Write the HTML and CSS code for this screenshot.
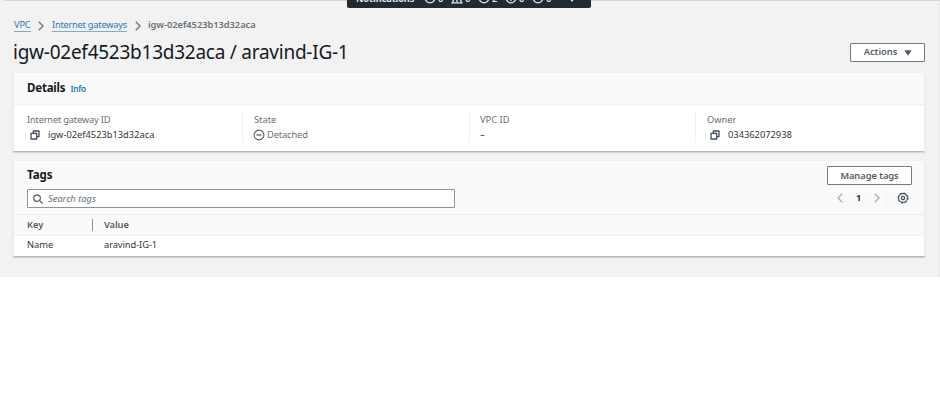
FILE: index.html
```
<!DOCTYPE html>
<html lang="en">
<head>
<meta charset="utf-8">
<title>Internet gateway details</title>
<link rel="stylesheet" href="styles.css">
</head>
<body>
<svg class="defs" aria-hidden="true">
  <symbol id="copy" viewBox="0 0 10 10"><path d="M1 3.3h5.7V9H1zM3.3 3.3V1H9v5.7H6.7" fill="none" stroke="#414d5c" stroke-width="1.3" stroke-linejoin="round"/></symbol>
  <symbol id="next" viewBox="0 0 6 10"><path d="M.8.8 5 5 .8 9.2" fill="none" stroke="currentColor" stroke-width="1.3"/></symbol>
  <symbol id="circle" viewBox="0 0 12 12"><circle cx="6" cy="6" r="4.8" fill="none" stroke="currentColor" stroke-width="1.3"/></symbol>
</svg>
<main class="console">
  <div class="notifications">
    <b class="n-title">Notifications</b>
    <span class="n-item"><svg><use href="#circle"/></svg>0</span>
    <span class="n-item"><svg viewBox="0 0 12 12"><path d="M6 1 1.2 10.8h9.6zM6 4v6" fill="none" stroke="currentColor" stroke-width="1.3"/></svg>0</span>
    <span class="n-item"><svg><use href="#circle"/></svg>2</span>
    <span class="n-item"><svg viewBox="0 0 12 12"><circle cx="6" cy="6" r="4.8" fill="none" stroke="currentColor" stroke-width="1.3"/><path d="M6 5v4" stroke="currentColor" stroke-width="1.3"/></svg>0</span>
    <span class="n-item"><svg><use href="#circle"/></svg>0</span>
    <svg class="n-caret" viewBox="0 0 6 6"><path d="M0 1h6L3 5z" fill="currentColor"/></svg>
  </div>
  <nav class="crumbs">
    <a class="c-vpc">VPC</a><svg><use href="#next"/></svg><a class="c-list">Internet gateways</a><svg><use href="#next"/></svg><span class="c-here">igw-02ef4523b13d32aca</span>
  </nav>
  <header class="page-head">
    <h1>igw-02ef4523b13d32aca / aravind-IG-1</h1>
    <button class="btn actions"><span>Actions</span><svg viewBox="0 0 8 6"><path d="M.3.3h7.4L4 5.8z" fill="#545b64"/></svg></button>
  </header>
  <section class="card details">
    <div class="card-head"><h2>Details</h2><a class="info">Info</a></div>
    <div class="columns">
      <div class="col"><div class="label l-id">Internet gateway ID</div><div class="value"><svg class="copy"><use href="#copy"/></svg><span class="v-id">igw-02ef4523b13d32aca</span></div></div>
      <div class="col"><div class="label">State</div><div class="value detached"><svg viewBox="0 0 12 12"><circle cx="6" cy="6" r="4.9" fill="none" stroke="currentColor" stroke-width="1.1"/><path d="M3.4 6h5.2" stroke="currentColor" stroke-width="1.2"/></svg><span>Detached</span></div></div>
      <div class="col"><div class="label">VPC ID</div><div class="value">–</div></div>
      <div class="col"><div class="label">Owner</div><div class="value"><svg class="copy"><use href="#copy"/></svg><span class="v-owner">034362072938</span></div></div>
    </div>
  </section>
  <section class="card tags">
    <div class="tags-head">
      <div class="left">
        <h2>Tags</h2>
        <div class="search"><svg viewBox="0 0 10 10"><circle cx="4.1" cy="4.1" r="3.3" fill="none" stroke="#545b64" stroke-width="1.2"/><path d="m6.5 6.5 3 3" stroke="#545b64" stroke-width="1.3"/></svg><span>Search tags</span></div>
      </div>
      <div class="right">
        <button class="btn manage"><span>Manage tags</span></button>
        <div class="pager">
          <svg class="arrow prev"><use href="#next"/></svg><b>1</b><svg class="arrow"><use href="#next"/></svg>
          <i></i>
          <svg class="gear" viewBox="0 0 12 12" fill="none" stroke="#414d5c"><circle cx="6" cy="6" r="4.4" stroke-width="1.1"/><circle cx="6" cy="6" r="5.1" stroke-width="1" stroke-dasharray="2 2.005"/><circle cx="6" cy="6" r="1.6" stroke-width="1.2"/></svg>
        </div>
      </div>
    </div>
    <div class="row head"><div class="key">Key</div><div class="val">Value</div></div>
    <div class="row"><div class="key">Name</div><div class="val">aravind-IG-1</div></div>
  </section>
</main>
</body>
</html>
```
FILE: styles.css
```
* { box-sizing: border-box; }
body { margin: 0; background: #fff; font: 9.3px/12px "Noto Sans", "Open Sans", sans-serif; color: #30363c; }
h1, h2 { margin: 0; }
svg { display: block; flex: none; }
span, h1, h2, a { white-space: nowrap; }
.defs { position: absolute; width: 0; height: 0; }
.console { position: relative; height: 277px; padding: 18px 14px 0 13px; background: #f2f2f2; border-right: 1px solid #e8e8e8; overflow: hidden; }
.console::before { content: ""; position: absolute; left: 4px; right: 0; top: 0; height: 1px; background: #d4d4d4; }
.notifications { position: absolute; left: 347px; top: -12px; width: 244px; height: 20px; padding: 4px 0 0 9px; display: flex; align-items: flex-start; background: #232a31; color: #e8eaec; border-radius: 0 0 2px 2px; line-height: 13px; }
.n-title { width: 68px; font-size: 9.2px; letter-spacing: -0.1px; }
.n-item { display: flex; width: 27px; gap: 2px; font-weight: 600; }
.n-item svg { width: 12px; height: 12px; }
.n-caret { width: 6px; height: 6px; margin: 5px 0 0 10px; }
.crumbs { display: flex; align-items: center; height: 14px; color: #687078; }
.crumbs a { flex: none; color: #2e77ae; border-bottom: 1px solid #74aed2; height: 13px; line-height: 12px; }
.crumbs svg { width: 6px; height: 10px; margin-top: 1px; }
.c-vpc { width: 17px; margin: 0 7px 0 1px; letter-spacing: -0.2px; }
.c-list { width: 75px; margin: 0 8px 0 8px; letter-spacing: -0.25px; }
.c-here { font-weight: 600; margin-left: 7px; letter-spacing: -0.04px; }
.page-head { display: flex; justify-content: space-between; height: 40px; }
h1 { font-size: 19px; line-height: 26px; font-weight: 400; color: #16191f; margin-top: 7px; letter-spacing: -0.25px; }
.btn { display: flex; align-items: center; justify-content: center; background: #fff; border: 1px solid #747a81; border-radius: 1px; padding: 0; font: 600 9.3px/12px "Noto Sans", sans-serif; color: #545b64; height: 19px; }
.actions { width: 75px; margin-top: 11px; gap: 7px; padding-left: 1px; }
.actions span { margin-top: -1px; }
.actions svg { width: 8px; height: 6px; }
.card { background: #fff; border: 1px solid #e9ebed; border-top-color: #f0f0f0; border-bottom-color: #b4b9bb; box-shadow: 0 1px 1px #d2d4d5; }
.details { height: 80px; }
.card-head { display: flex; align-items: center; height: 32px; padding: 0 0 2px 13px; background: #fafafa; border-bottom: 1px solid #f0f0f0; }
h2 { font-size: 11.5px; line-height: 14px; font-weight: 700; color: #16191f; letter-spacing: -0.2px; }
.info { margin: 2px 0 0 5px; font-size: 8.3px; font-weight: 600; color: #2878ad; letter-spacing: -0.25px; }
.columns { display: grid; grid-template-columns: 228px 227px 226px 1fr; padding-top: 7px; }
.col { height: 30px; padding-left: 11px; border-left: 1px solid #f0f1f1; }
.col:nth-child(3) { padding-left: 10px; }
.col:first-child { padding-left: 13px; border: 0; }
.label { color: #687078; height: 15px; line-height: 15px; }
.l-id { letter-spacing: -0.2px; }
.value { display: flex; align-items: center; height: 15px; }
.copy { width: 10px; height: 10px; margin: 1px 8px 0 3px; }
.detached { color: #687078; gap: 2px; letter-spacing: -0.12px; }
.detached svg { width: 12px; height: 12px; color: #545b64; margin-left: -1px; }
.tags { margin-top: 8px; height: 97px; }
.tags-head { display: flex; justify-content: space-between; height: 54px; padding: 5px 12px 0 13px; background: #fafafa; border-bottom: 1px solid #eaeded; }
.left h2 { margin-top: 2px; letter-spacing: 0; }
.search { display: flex; align-items: center; width: 428px; height: 19px; margin-top: 7px; padding-left: 5px; gap: 5px; background: #fff; border: 1px solid #8d9499; border-radius: 1px; color: #687078; font-style: italic; }
.search svg { width: 10px; height: 10px; }
.manage { width: 85px; letter-spacing: -0.05px; }
.pager { display: flex; align-items: center; height: 18px; margin-top: 4px; padding-left: 10px; }
.arrow { width: 6px; height: 10px; color: #a7adb2; }
.prev { transform: scaleX(-1); }
.pager b { width: 31px; text-align: center; font-size: 9px; color: #232f3e; }
.pager i { width: 1px; height: 18px; margin: 0 11px 0 6px; background: #f0f1f1; }
.gear { width: 12px; height: 12px; margin-left: -1px; }
.row { display: flex; align-items: center; height: 20px; padding: 0 0 2px 13px; }
.head { height: 21px; padding-bottom: 0; background: #fafafa; border-bottom: 1px solid #f0f1f1; font-weight: 600; color: #545b64; }
.key { width: 66px; line-height: 12px; }
.head .key { border-right: 1px solid #879596; }
.val { padding-left: 11px; letter-spacing: -0.07px; }
```
